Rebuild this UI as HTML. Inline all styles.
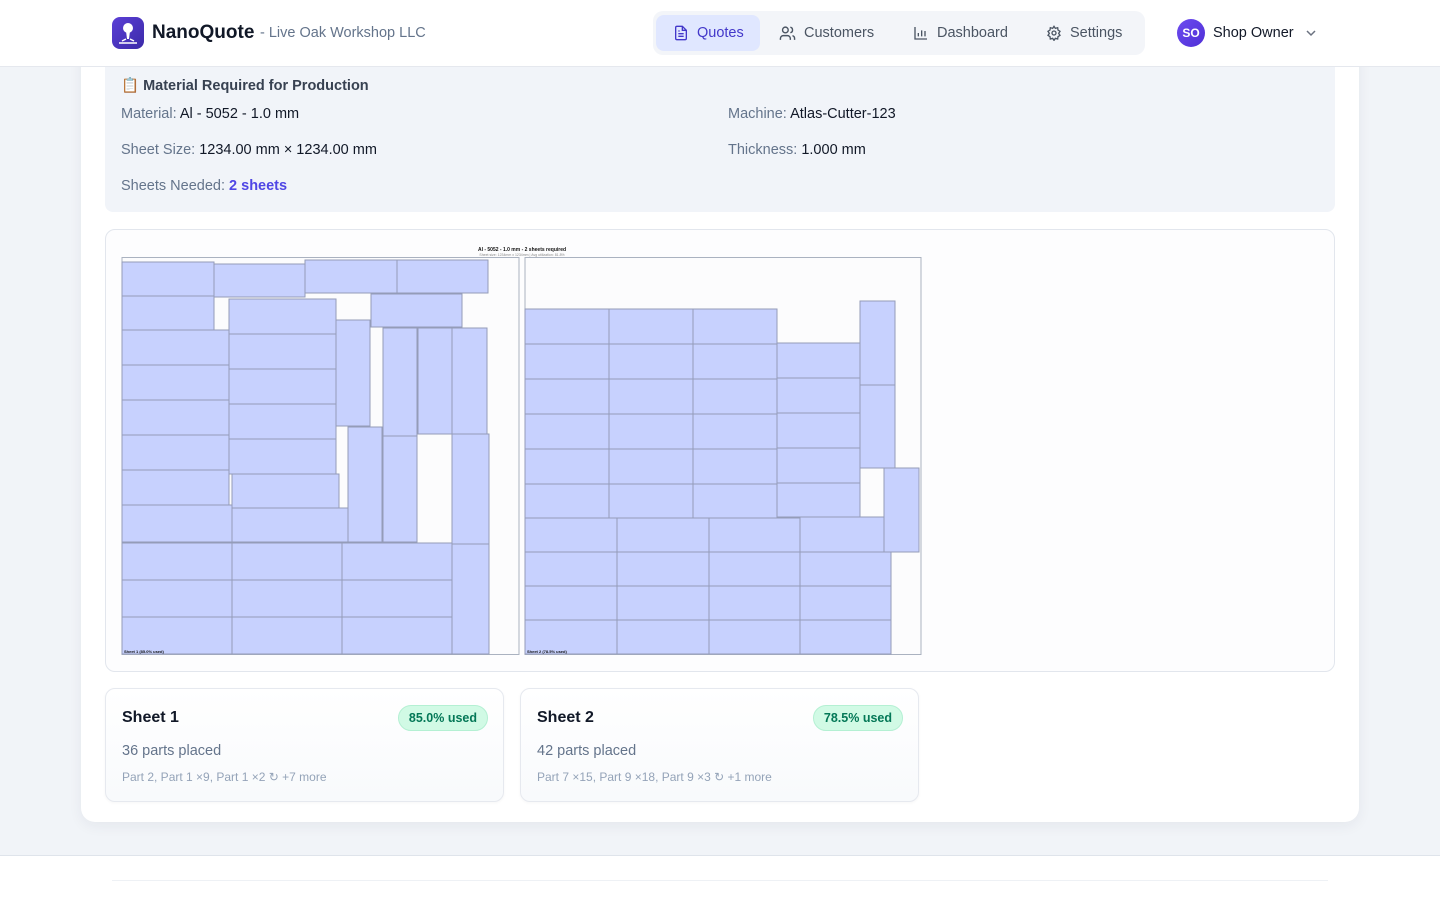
<!DOCTYPE html>
<html><head><meta charset="utf-8">
<style>
*{box-sizing:border-box;margin:0;padding:0}
body{width:1440px;height:900px;overflow:hidden;background:#f1f4f8;font-family:"Liberation Sans",sans-serif;color:#111827;position:relative}
.abs{position:absolute}
.hdr{left:0;top:0;width:1440px;height:67px;background:#fff;border-bottom:1px solid #e5e8ee;z-index:10}
.nav{left:653px;top:11px;width:492px;height:44px;background:#f3f5f9;border-radius:10px}
.ni{position:absolute;top:4px;height:36px;display:flex;align-items:center;gap:8px;font-size:14.5px;color:#4b5563;font-weight:500}
.card{left:81px;top:40px;width:1278px;height:782px;background:#fff;border-radius:14px;box-shadow:0 4px 14px rgba(30,40,70,.06)}
.mat{left:105px;top:58px;width:1230px;height:154px;background:#f1f4f9;border-radius:0 0 8px 8px}
.lbl{font-size:14.5px;color:#64748b}
.lbl b{font-weight:normal;color:#111827}
.nest{left:105px;top:229px;width:1230px;height:443px;border:1px solid #e2e6ed;border-radius:10px;background:#fdfdfe}
.sc{top:688px;width:399px;height:114px;border:1px solid #e6e9ef;border-radius:10px;background:linear-gradient(#fff,#f8fafc);box-shadow:0 1px 3px rgba(0,0,0,.04)}
.sc h3{position:absolute;left:16px;top:20px;font-size:16px;font-weight:bold;color:#111827}
.sc .bd{position:absolute;right:15px;top:16px;height:26px;padding:0 10px;border-radius:13px;background:#d1fae5;border:1px solid #b4f0d3;color:#047857;font-size:12.5px;font-weight:bold;line-height:24px}
.sc .p{position:absolute;left:16px;top:54px;font-size:14.5px;color:#64748b}
.sc .s{position:absolute;left:16px;top:81px;font-size:12px;color:#94a3b8}
</style></head><body>
<div class="abs card"></div>
<div class="abs mat"></div>
<div class="abs" style="left:121px;top:77px;font-size:14.5px;font-weight:bold;color:#374151">📋 Material Required for Production</div>
<div class="abs lbl" style="left:121px;top:106px">Material: <b>Al - 5052 - 1.0 mm</b></div>
<div class="abs lbl" style="left:121px;top:142px">Sheet Size: <b>1234.00 mm × 1234.00 mm</b></div>
<div class="abs lbl" style="left:121px;top:178px">Sheets Needed: <b style="color:#4f46e5;font-weight:bold">2 sheets</b></div>
<div class="abs lbl" style="left:728px;top:106px">Machine: <b>Atlas-Cutter-123</b></div>
<div class="abs lbl" style="left:728px;top:142px">Thickness: <b>1.000 mm</b></div>

<div class="abs hdr">
<div class="abs" style="left:112px;top:17px;width:32px;height:32px;border-radius:8px;background:linear-gradient(135deg,#5b3fd6,#3b2aa8)">
<svg width="32" height="32" viewBox="0 0 32 32"><circle cx="16" cy="11" r="5" fill="#fff"/><path d="M14 14h4l-1 8h-2z" fill="#fff"/><path d="M7 26h18M10 24l4-2M22 24l-4-2" stroke="#fff" stroke-width="1.5"/></svg></div>
<div class="abs" style="left:152px;top:22px;font-size:19px;font-weight:bold;color:#111827">NanoQuote</div>
<div class="abs" style="left:260px;top:25px;font-size:14.5px;color:#64748b">- Live Oak Workshop LLC</div>
<div class="abs nav">
<div class="ni" style="left:3px;width:104px;background:#e0e7ff;border-radius:8px;color:#4338ca;padding-left:17px">
<svg width="16" height="16" viewBox="0 0 24 24" fill="none" stroke="#4338ca" stroke-width="2"><path d="M14 2H6a2 2 0 0 0-2 2v16a2 2 0 0 0 2 2h12a2 2 0 0 0 2-2V8z"/><path d="M14 2v6h6M8 13h8M8 17h8M8 9h2"/></svg>Quotes</div>
<div class="ni" style="left:126px"><svg width="17" height="17" viewBox="0 0 24 24" fill="none" stroke="#4b5563" stroke-width="2"><circle cx="9" cy="7" r="4"/><path d="M2 21v-2a4 4 0 0 1 4-4h6a4 4 0 0 1 4 4v2M16 3.1a4 4 0 0 1 0 7.8M22 21v-2a4 4 0 0 0-3-3.9"/></svg>Customers</div>
<div class="ni" style="left:260px"><svg width="16" height="16" viewBox="0 0 24 24" fill="none" stroke="#4b5563" stroke-width="2"><path d="M3 3v18h18M8 17v-5M13 17V8M18 17v-8"/></svg>Dashboard</div>
<div class="ni" style="left:393px"><svg width="16" height="16" viewBox="0 0 24 24" fill="none" stroke="#4b5563" stroke-width="2"><circle cx="12" cy="12" r="3"/><path d="M12 2l2 3 3.5-1 .5 3.5 3 2-2 3 2 3-3 2-.5 3.5-3.5-1-2 3-2-3-3.5 1L6 17.5l-3-2 2-3-2-3 3-2L6.5 4 10 5z"/></svg>Settings</div>
</div>
<div class="abs" style="left:1177px;top:19px;width:28px;height:28px;border-radius:50%;background:linear-gradient(135deg,#6d4cf0,#4f2fd6);color:#fff;font-size:12px;font-weight:bold;text-align:center;line-height:28px">SO</div>
<div class="abs" style="left:1213px;top:25px;font-size:14.5px;font-weight:500;color:#111827">Shop Owner</div>
<svg class="abs" style="left:1305px;top:27px" width="12" height="12" viewBox="0 0 12 12"><path d="M2 4l4 4 4-4" fill="none" stroke="#6b7280" stroke-width="1.5"/></svg>
</div>

<div class="abs nest"></div>
<svg class="abs" style="left:0;top:0" width="1440" height="900">
<text x="522" y="251" font-size="5" font-weight="bold" text-anchor="middle" fill="#111" font-family="Liberation Sans">Al - 5052 - 1.0 mm - 2 sheets required</text>
<text x="522" y="256" font-size="3.5" text-anchor="middle" fill="#888" font-family="Liberation Sans">Sheet size: 1234mm x 1234mm | Avg utilization: 81.8%</text>
<rect x="122" y="257.5" width="397" height="397" fill="#fcfcfd" stroke="#aab2c0"/>
<rect x="525" y="257.5" width="396" height="397" fill="#fcfcfd" stroke="#aab2c0"/>
<g fill="#c7d1fe" stroke="#949cb8" stroke-width="1">
<rect x="122" y="262" width="92" height="34"/><rect x="214" y="264" width="91" height="33"/><rect x="305" y="260" width="92" height="33"/><rect x="397" y="260" width="91" height="33"/>
<rect x="122" y="296" width="92" height="34"/><rect x="371" y="294" width="91" height="33"/>
<rect x="122" y="330" width="107" height="35"/><rect x="122" y="365" width="107" height="35"/><rect x="122" y="400" width="107" height="35"/><rect x="122" y="435" width="107" height="35"/><rect x="122" y="470" width="107" height="35"/><rect x="122" y="505" width="110" height="37"/>
<rect x="229" y="299" width="107" height="35"/><rect x="229" y="334" width="107" height="35"/><rect x="229" y="369" width="107" height="35"/><rect x="229" y="404" width="107" height="35"/><rect x="229" y="439" width="107" height="35"/><rect x="232" y="474" width="107" height="34"/><rect x="232" y="508" width="116" height="34"/>
<rect x="336" y="320" width="34" height="106"/><rect x="348" y="427" width="34" height="115"/>
<rect x="383" y="328" width="34" height="108"/><rect x="418" y="328" width="34" height="106"/><rect x="452" y="328" width="35" height="106"/><rect x="383" y="436" width="34" height="106"/>
<rect x="452" y="434" width="37" height="110"/><rect x="452" y="544" width="37" height="110"/>
<rect x="122" y="543" width="110" height="37"/><rect x="232" y="543" width="110" height="37"/><rect x="342" y="543" width="110" height="37"/>
<rect x="122" y="580" width="110" height="37"/><rect x="232" y="580" width="110" height="37"/><rect x="342" y="580" width="110" height="37"/>
<rect x="122" y="617" width="110" height="37"/><rect x="232" y="617" width="110" height="37"/><rect x="342" y="617" width="110" height="37"/>
<rect x="525" y="309" width="84" height="35"/><rect x="609" y="309" width="84" height="35"/><rect x="693" y="309" width="84" height="35"/>
<rect x="525" y="344" width="84" height="35"/><rect x="609" y="344" width="84" height="35"/><rect x="693" y="344" width="84" height="35"/><rect x="777" y="343" width="83" height="35"/>
<rect x="525" y="379" width="84" height="35"/><rect x="609" y="379" width="84" height="35"/><rect x="693" y="379" width="84" height="35"/><rect x="777" y="378" width="83" height="35"/>
<rect x="525" y="414" width="84" height="35"/><rect x="609" y="414" width="84" height="35"/><rect x="693" y="414" width="84" height="35"/><rect x="777" y="413" width="83" height="35"/>
<rect x="525" y="449" width="84" height="35"/><rect x="609" y="449" width="84" height="35"/><rect x="693" y="449" width="84" height="35"/><rect x="777" y="448" width="83" height="35"/>
<rect x="525" y="484" width="84" height="34"/><rect x="609" y="484" width="84" height="34"/><rect x="693" y="484" width="84" height="34"/><rect x="777" y="483" width="83" height="34"/>
<rect x="860" y="301" width="35" height="84"/><rect x="860" y="385" width="35" height="83"/><rect x="884" y="468" width="35" height="84"/>
<rect x="525" y="518" width="92" height="34"/><rect x="617" y="518" width="92" height="34"/><rect x="709" y="518" width="91" height="34"/><rect x="800" y="517" width="84" height="35"/>
<rect x="525" y="552" width="92" height="34"/><rect x="617" y="552" width="92" height="34"/><rect x="709" y="552" width="91" height="34"/><rect x="800" y="552" width="91" height="34"/>
<rect x="525" y="586" width="92" height="34"/><rect x="617" y="586" width="92" height="34"/><rect x="709" y="586" width="91" height="34"/><rect x="800" y="586" width="91" height="34"/>
<rect x="525" y="620" width="92" height="34"/><rect x="617" y="620" width="92" height="34"/><rect x="709" y="620" width="91" height="34"/><rect x="800" y="620" width="91" height="34"/>
</g>
<text x="124" y="653" font-size="4" font-weight="bold" fill="#111" font-family="Liberation Sans">Sheet 1 (85.0% used)</text>
<text x="527" y="653" font-size="4" font-weight="bold" fill="#111" font-family="Liberation Sans">Sheet 2 (78.5% used)</text>
</svg>

<div class="abs sc" style="left:105px"><h3>Sheet 1</h3><div class="bd">85.0% used</div><div class="p">36 parts placed</div><div class="s">Part 2, Part 1 ×9, Part 1 ×2 ↻ +7 more</div></div>
<div class="abs sc" style="left:520px"><h3>Sheet 2</h3><div class="bd">78.5% used</div><div class="p">42 parts placed</div><div class="s">Part 7 ×15, Part 9 ×18, Part 9 ×3 ↻ +1 more</div></div>

<div class="abs" style="left:0;top:855px;width:1440px;height:45px;background:#fff;border-top:1px solid #dfe4eb"></div>
<div class="abs" style="left:112px;top:880px;width:1216px;height:1px;background:#eef1f5"></div>
</body></html>
